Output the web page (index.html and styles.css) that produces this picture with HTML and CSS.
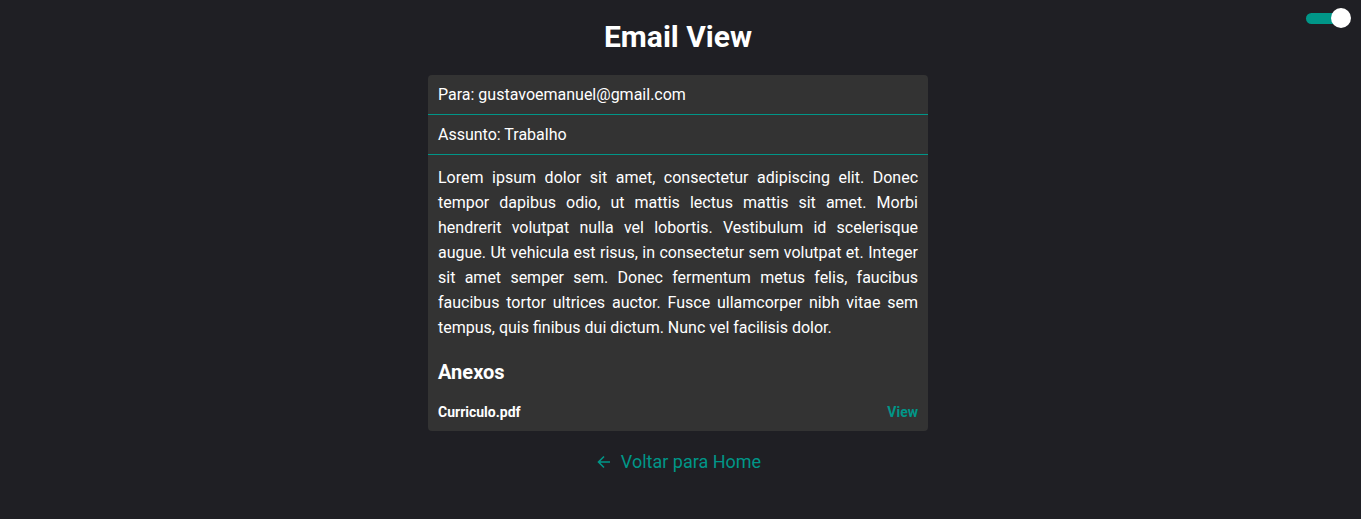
FILE: index.html
```html
<!DOCTYPE html>
<html lang="pt">
<head>
<meta charset="utf-8">
<title>Email View</title>
<link rel="stylesheet" href="styles.css">
</head>
<body>
<div class="toggle"><span class="track"></span><span class="knob"></span></div>
<main class="page">
  <h1 class="title">Email View</h1>
  <section class="card">
    <div class="field">Para: gustavoemanuel@gmail.com</div>
    <div class="field">Assunto: Trabalho</div>
    <div class="content">
      <p class="text">Lorem ipsum dolor sit amet, consectetur adipiscing elit. Donec tempor dapibus odio, ut mattis lectus mattis sit amet. Morbi hendrerit volutpat nulla vel lobortis. Vestibulum id scelerisque augue. Ut vehicula est risus, in consectetur sem volutpat et. Integer sit amet semper sem. Donec fermentum metus felis, faucibus faucibus tortor ultrices auctor. Fusce ullamcorper nibh vitae sem tempus, quis finibus dui dictum. Nunc vel facilisis dolor.</p>
      <h3 class="attach-title">Anexos</h3>
      <div class="attach">
        <span class="file">Curriculo.pdf</span>
        <a class="view" href="#">View</a>
      </div>
    </div>
  </section>
  <a class="back" href="#"><svg class="arrow" width="14" height="14" viewBox="0 0 14 14" fill="none" stroke="currentColor" stroke-width="1.6"><path d="M13 7H1.5M7 1.5L1.5 7L7 12.5"/></svg>Voltar para Home</a>
</main>
</body>
</html>
```
FILE: styles.css
```css
html, body {
  margin: 0;
  padding: 0;
  background: #1f1f24;
  color: #ffffff;
  font-family: Roboto, "Liberation Sans", sans-serif;
}
.toggle {
  position: absolute;
  top: 8px;
  right: 10px;
  width: 45px;
  height: 20px;
}
.toggle .track {
  position: absolute;
  left: 0;
  top: 5px;
  width: 36px;
  height: 11px;
  border-radius: 6px;
  background: #009688;
}
.toggle .knob {
  position: absolute;
  left: 25px;
  top: 0;
  width: 20px;
  height: 20px;
  border-radius: 50%;
  background: #ffffff;
}
.page {
  display: flex;
  flex-direction: column;
  align-items: center;
  padding-right: 5px;
}
.title {
  margin: 19px 0 21px;
  font-size: 30px;
  line-height: 35px;
  font-weight: 700;
  color: #ffffff;
}
.card {
  width: 500px;
  background: #333333;
  border-radius: 4px;
}
.field {
  padding: 10px;
  font-size: 16px;
  line-height: 19px;
  border-bottom: 1px solid #009688;
}
.content {
  padding: 10px 10px 11px;
}
.text {
  margin: 0;
  font-size: 16px;
  line-height: 25px;
  text-align: justify;
}
.attach-title {
  margin: 20px 0 20px;
  font-size: 20px;
  line-height: 24px;
  font-weight: 700;
  color: #ffffff;
}
.attach {
  display: flex;
  justify-content: space-between;
  font-size: 14px;
  line-height: 16px;
  font-weight: 700;
}
.view {
  color: #009688;
  text-decoration: none;
}
.back {
  margin-top: 20px;
  margin-left: 2px;
  display: flex;
  align-items: center;
  gap: 10px;
  color: #009688;
  font-size: 18px;
  line-height: 21px;
  text-decoration: none;
}
```
